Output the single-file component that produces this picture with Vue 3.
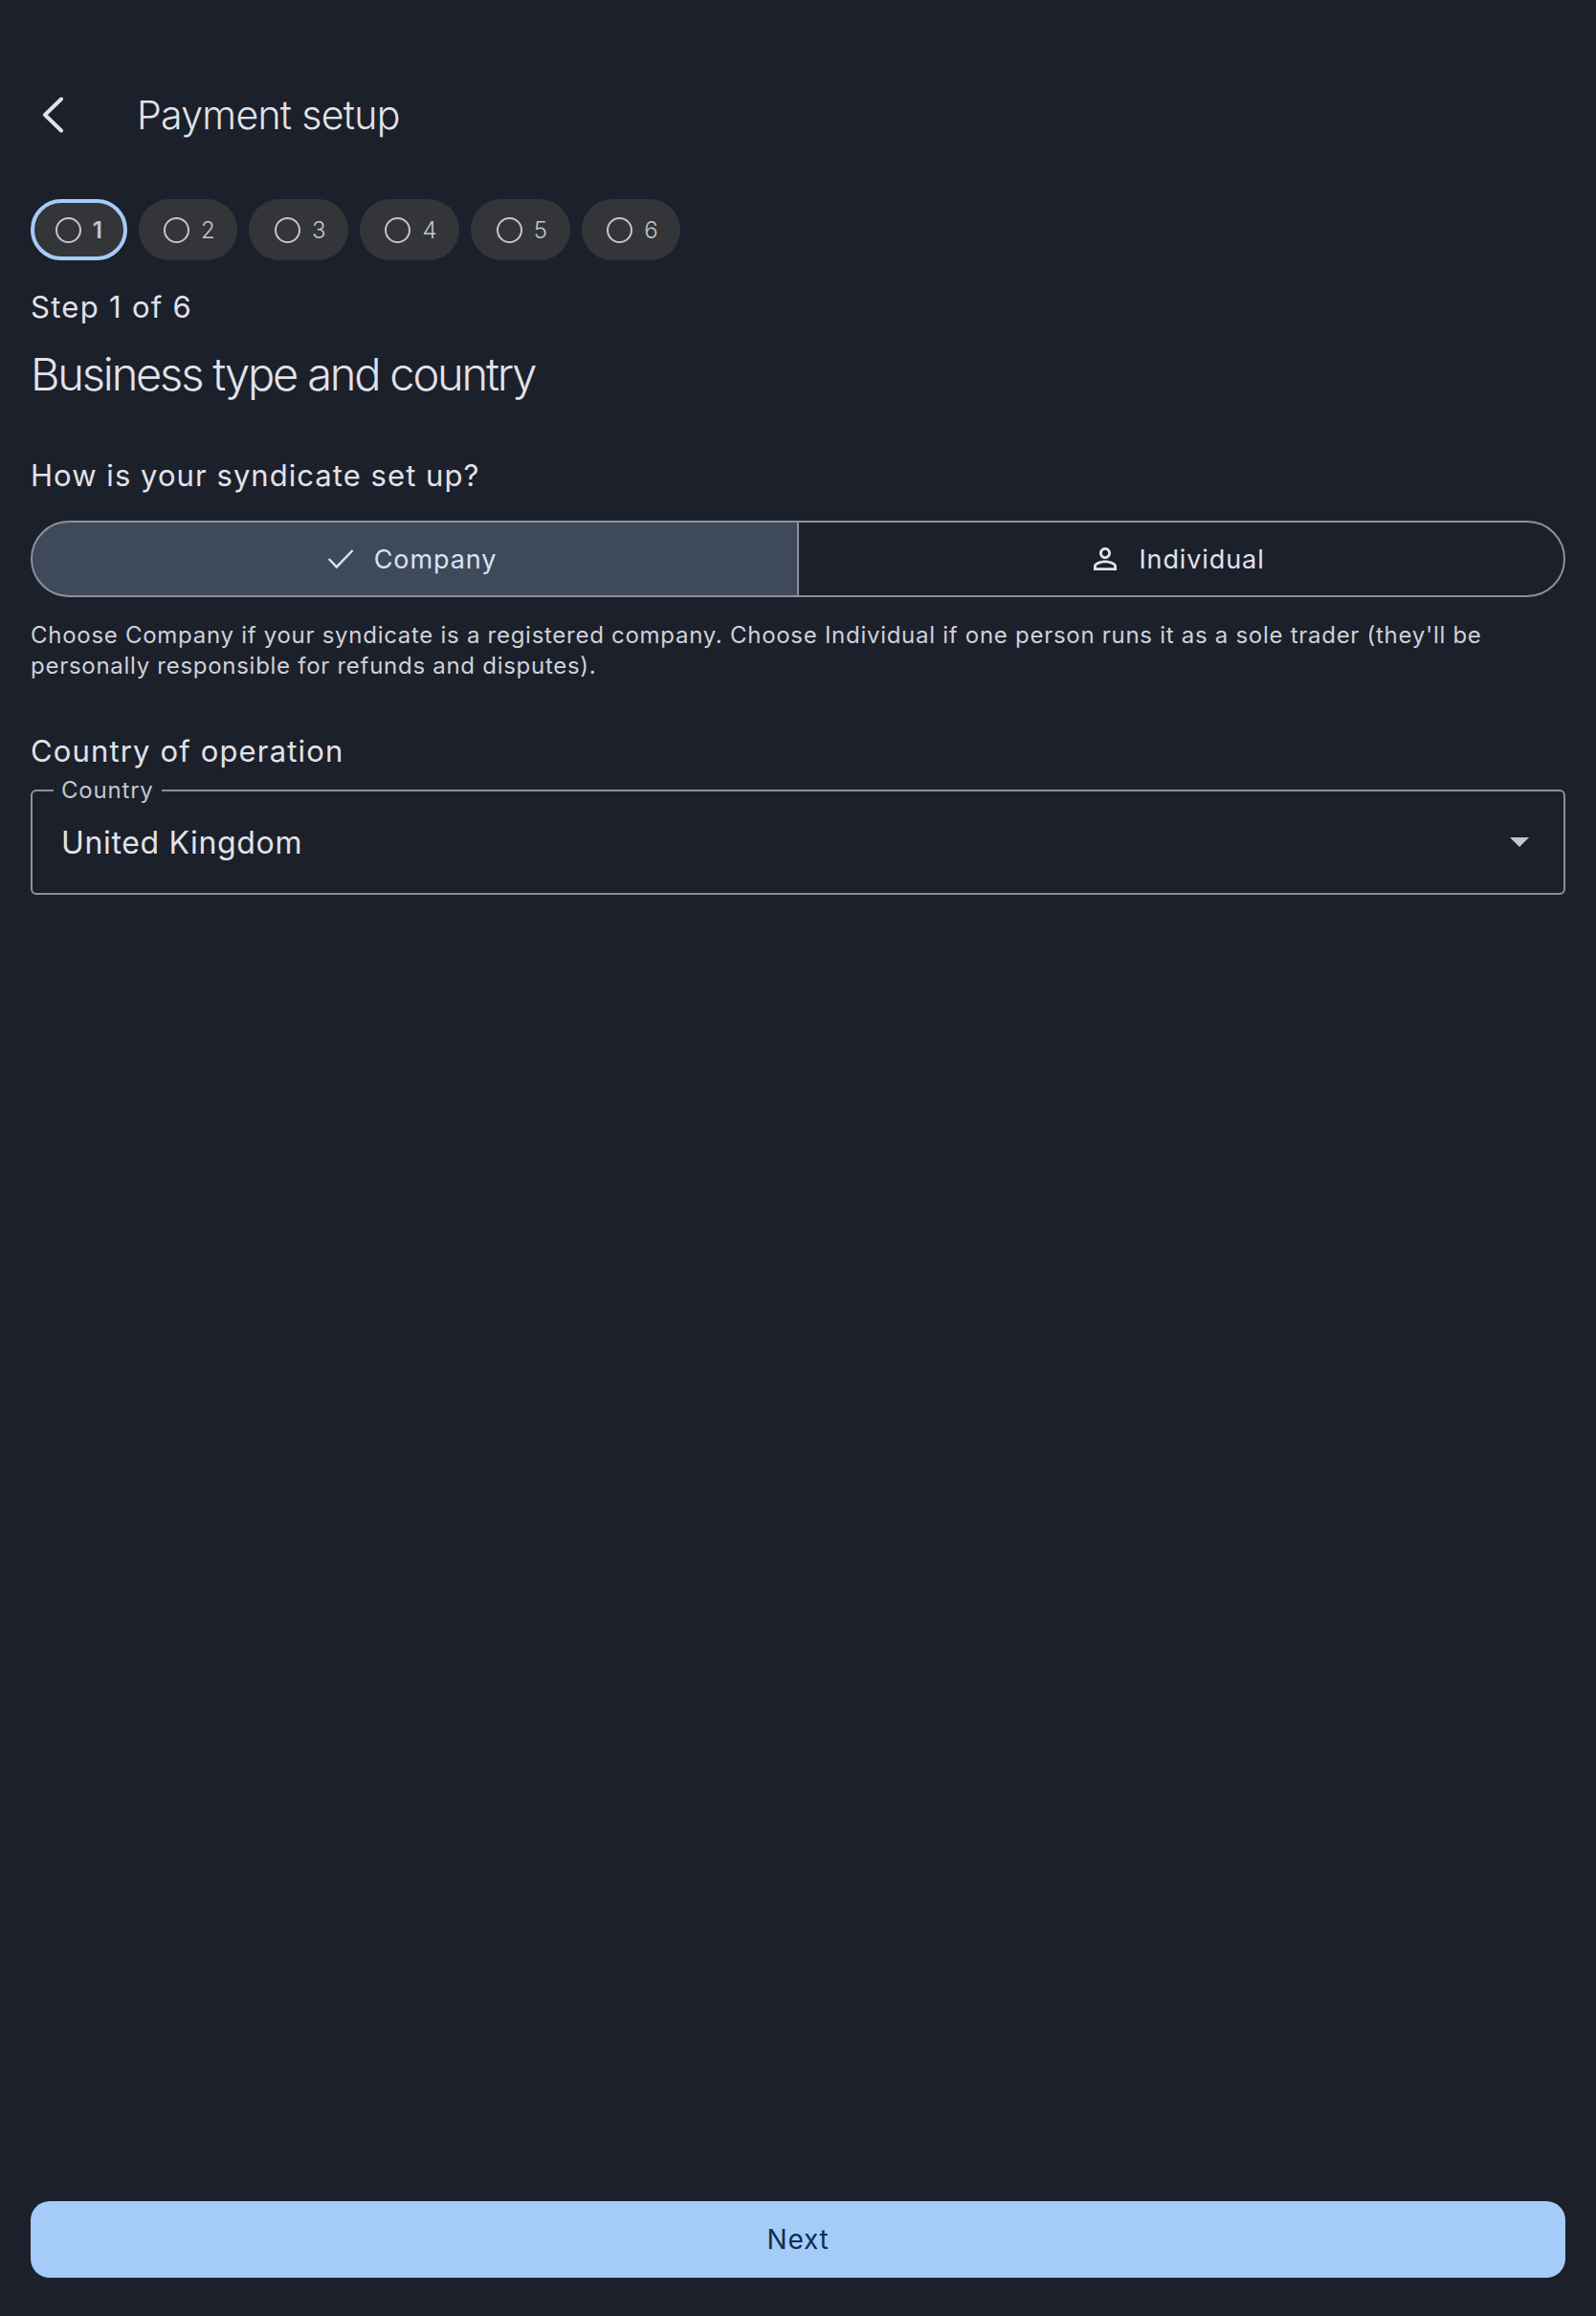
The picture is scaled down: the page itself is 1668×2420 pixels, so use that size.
<script setup>
const steps = [1, 2, 3, 4, 5, 6]
</script>

<template>
  <div class="page">
    <header class="top-bar">
      <button class="back" type="button" aria-label="Back">
        <svg viewBox="0 0 24 38" width="24" height="38" fill="none">
          <path d="M21 2.5 4 19l17 16.5" stroke="currentColor" stroke-width="4" stroke-linecap="round" stroke-linejoin="round" />
        </svg>
      </button>
      <h1 class="title">Payment setup</h1>
    </header>

    <div class="chips">
      <div v-for="n in steps" :key="n" class="chip" :class="{ active: n === 1 }">
        <span class="ring"></span>
        <span>{{ n }}</span>
      </div>
    </div>

    <p class="step-label">Step 1 of 6</p>
    <h2 class="heading">Business type and country</h2>

    <h3 class="section first">How is your syndicate set up?</h3>
    <div class="segmented">
      <button class="seg selected" type="button">
        <svg viewBox="0 0 24 24" width="36" height="36" fill="none">
          <path d="M3.8 12 9.2 17.6 20.4 6" stroke="currentColor" stroke-width="1.6" />
        </svg>
        Company
      </button>
      <button class="seg" type="button">
        <svg viewBox="0 0 24 24" width="36" height="36" fill="currentColor">
          <path d="M12 5.9c1.16 0 2.1.94 2.1 2.1s-.94 2.1-2.1 2.1S9.9 9.16 9.9 8s.94-2.1 2.1-2.1m0 9c2.97 0 6.1 1.46 6.1 2.1v1.1H5.9V17c0-.64 3.13-2.1 6.1-2.1M12 4C9.79 4 8 5.79 8 8s1.79 4 4 4 4-1.79 4-4-1.79-4-4-4zm0 9c-2.67 0-8 1.34-8 4v3h16v-3c0-2.66-5.33-4-8-4z" />
        </svg>
        Individual
      </button>
    </div>
    <p class="hint">
      Choose Company if your syndicate is a registered company. Choose Individual if one person runs it as a sole trader (they'll be personally responsible for refunds and disputes).
    </p>

    <h3 class="section second">Country of operation</h3>
    <div class="select">
      <span class="float-label">Country</span>
      <span class="value">United Kingdom</span>
      <svg class="caret" viewBox="0 0 20 10" width="20" height="10" fill="currentColor">
        <path d="M0 0h20L10 10z" />
      </svg>
    </div>

    <button class="next" type="button">Next</button>
  </div>
</template>

<style scoped>
.page {
  box-sizing: border-box;
  display: flex;
  flex-direction: column;
  min-height: 2420px;
  padding: 88px 32px 40px;
  background: #1c202b;
  color: #e2e2e9;
  font-family: Inter, "Noto Sans", sans-serif;
}

.top-bar {
  display: flex;
  align-items: center;
  height: 64px;
  margin-bottom: 56px;
}

.back {
  display: flex;
  width: 111px;
  padding: 0 0 0 11px;
  border: none;
  background: none;
  color: #e2e2e9;
}

.title {
  margin: 0;
  font-size: 41px;
  font-weight: 300;
  letter-spacing: -0.7px;
}

.chips {
  display: flex;
  gap: 12px;
}

.chip {
  box-sizing: border-box;
  display: flex;
  align-items: center;
  justify-content: center;
  gap: 12px;
  width: 103.8px;
  height: 64px;
  padding-left: 3px;
  border-radius: 32px;
  background: #343539;
  color: #c4c6cf;
  font-size: 24px;
  font-weight: 300;
}

.chip.active {
  width: 100.5px;
  padding-left: 0;
  border: 4px solid #a5cbf9;
  font-weight: 600;
}

.ring {
  box-sizing: border-box;
  width: 27px;
  height: 27px;
  border: 2.5px solid #c4c6cf;
  border-radius: 50%;
}

.step-label {
  margin: 29px 0 0;
  font-size: 31px;
  line-height: 40px;
  font-weight: 400;
  letter-spacing: 1.3px;
}

.heading {
  margin: 22px 0 0;
  font-size: 47px;
  line-height: 56px;
  font-weight: 300;
  letter-spacing: -2.2px;
}

.section {
  margin: 0;
  font-size: 31px;
  line-height: 40px;
  font-weight: 400;
  letter-spacing: 1.05px;
}

.section.first { margin-top: 58px; }
.section.second { margin-top: 53px; letter-spacing: 1.15px; }

.segmented {
  display: flex;
  height: 80px;
  margin-top: 27px;
}

.seg {
  flex: 1;
  display: flex;
  align-items: center;
  justify-content: center;
  gap: 17px;
  padding: 0 10px 0 0;
  border: 2px solid #8e9099;
  background: none;
  color: #e2e2e9;
  font-family: inherit;
  font-size: 27px;
  letter-spacing: 0.9px;
}

.seg:first-child {
  border-radius: 40px 0 0 40px;
}

.seg:last-child {
  margin-left: -2px;
  border-radius: 0 40px 40px 0;
}

.seg.selected {
  background: #3e4a59;
  color: #d7e3f7;
}

.hint {
  margin: 24px 0 0;
  font-size: 24px;
  line-height: 32px;
  letter-spacing: 0.72px;
  color: #d0d1d8;
}

.select {
  position: relative;
  display: flex;
  align-items: center;
  justify-content: space-between;
  height: 110px;
  margin-top: 20px;
  padding: 0 36px 0 30px;
  box-sizing: border-box;
  border: 2px solid #8e9099;
  border-radius: 6px;
}

/* sits on top of the outline, like a notched field */
.float-label {
  position: absolute;
  top: -14px;
  left: 22px;
  padding: 0 8px;
  background: #1c202b;
  font-size: 24px;
  line-height: 26px;
  color: #c4c6cf;
  letter-spacing: 0.8px;
}

.value {
  font-size: 32px;
  letter-spacing: 0.65px;
}

.caret {
  color: #c4c6cf;
}

.next {
  margin-top: auto;
  height: 80px;
  border: none;
  border-radius: 20px;
  background: #a5cbf9;
  color: #0f2f52;
  font-family: inherit;
  font-size: 28px;
  font-weight: 400;
  letter-spacing: 0.8px;
}
</style>

<style>
html, body {
  background: #1c202b;
}
</style>
